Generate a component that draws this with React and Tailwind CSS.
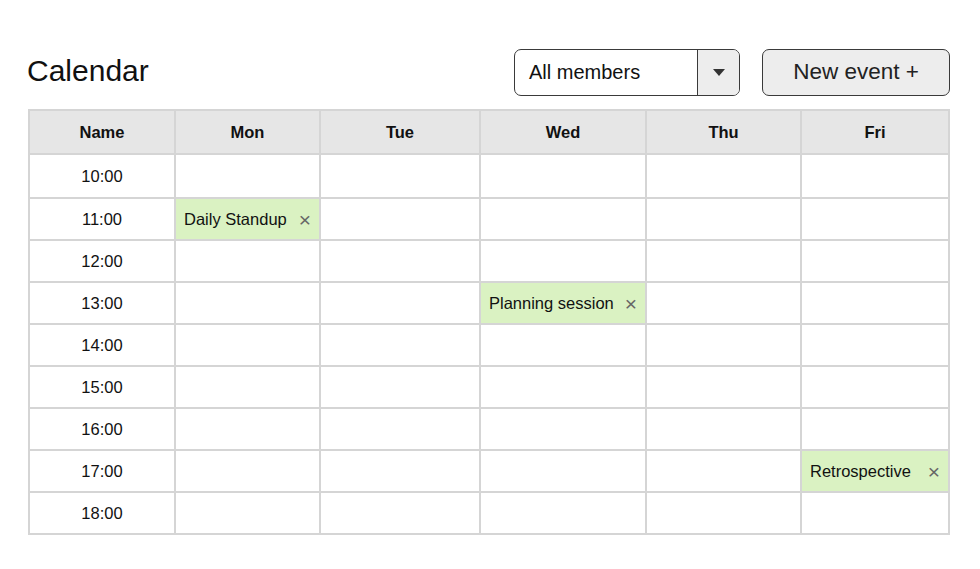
import React from 'react';

const days = ['Mon', 'Tue', 'Wed', 'Thu', 'Fri'];
const hours = ['10:00', '11:00', '12:00', '13:00', '14:00', '15:00', '16:00', '17:00', '18:00'];
const widths = [146, 145, 160, 166, 155, 148];

// events keyed by "hour|day"
const events = {
  '11:00|Mon': 'Daily Standup',
  '13:00|Wed': 'Planning session',
  '17:00|Fri': 'Retrospective',
};

const cellBorder = 'border-2 border-[#d5d5d5]';

export default function App() {
  return (
    <div className="w-[980px] h-[569px] bg-white text-[#111]" style={{ fontFamily: '"Liberation Sans", Arial, sans-serif' }}>
      <div className="pl-[28px] pr-[30px] pt-[49px]">
        <div className="flex items-center justify-between h-[46px]">
          <h1 className="text-[30px] leading-none -mt-[3px] -ml-[1px]">Calendar</h1>
          <div className="flex items-center gap-[22px]">
            <div className="flex w-[226px] h-[47px] border border-[#3a3a3a] rounded-[7px] overflow-hidden">
              <div className="flex-1 flex items-center pl-[14px] text-[20px]">All members</div>
              <div className="w-[42px] flex items-center justify-center bg-[#ededed] border-l border-[#3a3a3a]">
                <svg width="12" height="7" viewBox="0 0 12 7">
                  <path d="M0 0 L12 0 L6 7 Z" fill="#333" />
                </svg>
              </div>
            </div>
            <button className="w-[188px] h-[47px] bg-[#ededed] border border-[#3a3a3a] rounded-[7px] text-[22.5px] text-[#222]">
              New event +
            </button>
          </div>
        </div>

        <table className="mt-[14px] border-collapse table-fixed text-[16.5px]" style={{ width: 920 }}>
          <colgroup>
            {widths.map((w, i) => (
              <col key={i} style={{ width: w }} />
            ))}
          </colgroup>
          <thead>
            <tr className="h-[44px] bg-[#e6e6e6]">
              <th className={`${cellBorder} font-bold`}>Name</th>
              {days.map((d) => (
                <th key={d} className={`${cellBorder} font-bold`}>{d}</th>
              ))}
            </tr>
          </thead>
          <tbody>
            {hours.map((h, i) => (
              <tr key={h} className={i === 0 ? 'h-[44px]' : 'h-[42px]'}>
                <td className={`${cellBorder} text-center`}>{h}</td>
                {days.map((d) => {
                  const ev = events[`${h}|${d}`];
                  if (!ev) return <td key={d} className={cellBorder} />;
                  return (
                    <td key={d} className={`${cellBorder} bg-[#daf2c2] p-0`}>
                      <div className="flex items-center justify-between pl-[8px] pr-[8px]">
                        <span>{ev}</span>
                        <span className="text-[#666] text-[21px] leading-none">×</span>
                      </div>
                    </td>
                  );
                })}
              </tr>
            ))}
          </tbody>
        </table>
      </div>
    </div>
  );
}
